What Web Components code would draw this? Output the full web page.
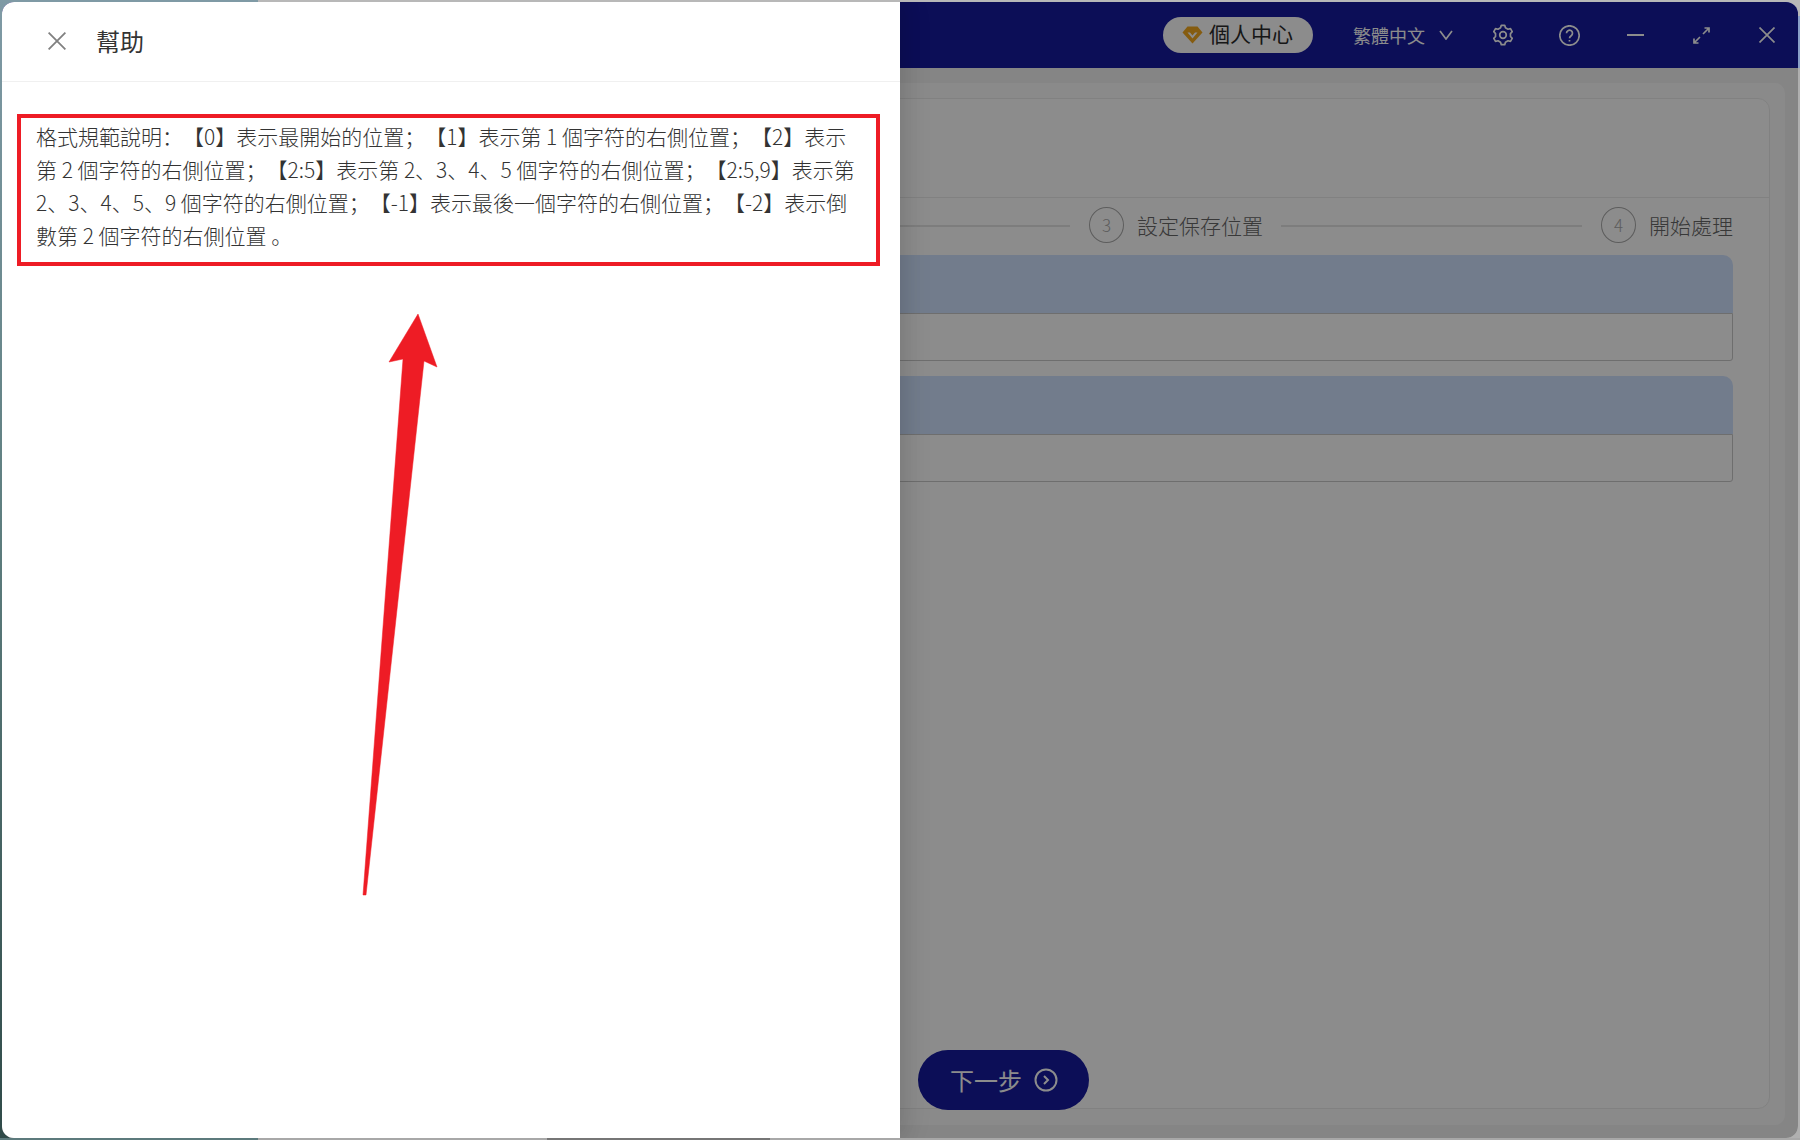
<!DOCTYPE html>
<html lang="zh-Hant">
<head>
<meta charset="utf-8">
<title>幫助</title>
<style>
    html, body {
        margin: 0;
        height: 100%;
    }
    body {
        box-sizing: border-box;
        height: 1140px;
        padding: 2px;
        font-family: "Noto Sans CJK SC", "Liberation Sans", sans-serif;
        text-spacing-trim: space-all;
        background:
            linear-gradient(90deg, #7f9aa5 0, #7f9aa5 258px, #b8b8b8 258px, #b8b8b8 100%) top / 100% 2px no-repeat,
            linear-gradient(90deg, #5c7a7c 0, #5c7a7c 258px, #a8a8a8 258px, #a8a8a8 547px, #767676 547px, #767676 770px, #a8a8a8 770px) bottom / 100% 2px no-repeat,
            linear-gradient(180deg, #7f9aa5 0, #5f7f80 45%, #2f4a48 100%) left / 14px 100% no-repeat,
            linear-gradient(180deg, #b8b8b8 0, #b8b8b8 16px, #8aa0c8 16px, #8aa0c8 68px, #b0b0b0 68px) right / 14px 100% no-repeat,
            #b0b0b0;
    }
</style>
</head>
<body>
<help-window>
    <app-header slot="header"></app-header>
    <app-step-bar></app-step-bar>
    <app-block></app-block>
    <app-block></app-block>
    <help-drawer slot="drawer" lang="zh-Hans" heading="幫助">
        格式規範說明：【0】表示最開始的位置；【1】表示第 1 個字符的右側位置；【2】表示第 2 個字符的右側位置；【2:5】表示第 2、3、4、5 個字符的右側位置；【2:5,9】表示第 2、3、4、5、9 個字符的右側位置；【-1】表示最後一個字符的右側位置；【-2】表示倒數第 2 個字符的右側位置 。
    </help-drawer>
</help-window>

<script>
    // small helper, every element below is just a template + open shadow root
    function makeShadow(el, html) {
        const root = el.attachShadow({ mode: 'open' });
        const t = document.createElement('template');
        t.innerHTML = html;
        root.appendChild(t.content.cloneNode(true));
        return root;
    }

    // outline of a six lobed cog around the point (cx, cy)
    function gearPath(cx, cy, outer, inner) {
        let d = '';
        for (let i = 0; i < 6; i++) {
            const a = -90 + i * 60;
            [[-19, inner], [-10, outer], [10, outer], [19, inner]].forEach(function (p, n) {
                const r = (a + p[0]) * Math.PI / 180;
                const x = (cx + Math.cos(r) * p[1]).toFixed(2);
                const y = (cy + Math.sin(r) * p[1]).toFixed(2);
                d += ((i === 0 && n === 0) ? 'M' : 'L') + x + ' ' + y;
            });
        }
        return d + 'z';
    }

    class HelpWindow extends HTMLElement {
        constructor() {
            super();
            makeShadow(this, `
            <style>
                :host {
                    display: flex;
                    flex-direction: column;
                    position: relative;
                    height: 1136px;
                    border-radius: 12px;
                    overflow: hidden;
                    background: #f2f2f2;
                }
                .main {
                    flex: 1;
                    display: flex;
                    flex-direction: column;
                    min-height: 0;
                    padding: 15px 13px 13px 15px;
                }
                .panel {
                    flex: 1;
                    display: flex;
                    flex-direction: column;
                    min-height: 0;
                    padding: 15px 15px 16px 15px;
                    background: #fbfbfb;
                    border-radius: 10px;
                }
                .card {
                    flex: 1;
                    display: flex;
                    flex-direction: column;
                    border: 1px solid #ececec;
                    border-radius: 12px;
                    background: #fff;
                }
                .top {
                    height: 98px;
                    border-bottom: 1px solid #ececec;
                    flex: none;
                }
                .body {
                    flex: 1;
                    display: flex;
                    flex-direction: column;
                    padding: 9px 36px 0;
                }
                .foot {
                    display: grid;
                    grid-template-columns: 1fr 1fr;
                    align-items: end;
                }
                .next {
                    grid-column: 2;
                    justify-self: start;
                    margin-left: 17px;
                    margin-bottom: -2px;
                    display: flex;
                    align-items: center;
                    gap: 12px;
                    box-sizing: border-box;
                    width: 171px;
                    height: 60px;
                    padding-left: 32px;
                    border-radius: 30px;
                    background: #161a9e;
                    color: #fff;
                    font-size: 24px;
                }
                .next span { margin-top: -2px; }
                .next svg { display: block; }
                .mask {
                    position: absolute;
                    inset: 0;
                    background: rgba(0, 0, 0, .45);
                }
                ::slotted(help-drawer) {
                    position: absolute;
                    left: 0;
                    top: 0;
                    bottom: 0;
                }
            </style>
            <slot name="header"></slot>
            <div class="main">
                <div class="panel">
                    <div class="card">
                        <div class="top"></div>
                        <div class="body"><slot></slot></div>
                        <div class="foot">
                            <div class="next"><span>下一步</span>
                                <svg width="24" height="24" viewBox="0 0 24 24" fill="none" stroke="#fff" stroke-width="2">
                                    <circle cx="12" cy="12" r="10.5"/>
                                    <path d="M10 8l4 4-4 4"/>
                                </svg>
                            </div>
                        </div>
                    </div>
                </div>
            </div>
            <div class="mask"></div>
            <slot name="drawer"></slot>`);
        }
    }

    class AppHeader extends HTMLElement {
        constructor() {
            super();
            makeShadow(this, `
            <style>
                :host {
                    display: flex;
                    align-items: center;
                    justify-content: flex-end;
                    flex: none;
                    height: 66px;
                    padding-right: 23px;
                    background: #161a9e;
                    color: #fff;
                }
                .vip {
                    display: flex;
                    align-items: center;
                    gap: 6px;
                    box-sizing: border-box;
                    width: 150px;
                    height: 36px;
                    margin-right: 40px;
                    padding-left: 19px;
                    border-radius: 18px;
                    background: #fff;
                    color: #2a2a2a;
                    font-size: 21px;
                    line-height: 33px;
                }
                .vip span { display: block; height: 36px; }
                .lang {
                    font-size: 18px;
                    margin-right: 14px;
                }
                svg { display: block; flex: none; fill: none; stroke: #fff; stroke-width: 1.7; }
                .chev { margin-right: 40px; }
                .gear { margin-right: 46px; }
                .help { margin-right: 47px; }
                .min { margin-right: 49px; }
                .max { margin-right: 49px; }
            </style>
            <div class="vip">
                <svg width="21" height="18" viewBox="0 0 21 18" style="stroke:none">
                    <path fill="#f2a81e" d="M5.500.5h10l5 6L10.500 17.500.5 6.500z"/>
                    <path fill="#fff" d="M5.500 6.500h2.500l2.500 3 2.500-3h2.500l-5 6z"/>
                </svg>
                <span>個人中心</span>
            </div>
            <span class="lang">繁體中文</span>
            <svg class="chev" width="14" height="10" viewBox="0 0 14 10"><path d="M1 1l6 8 6-8"/></svg>
            <svg class="gear" width="20" height="22" viewBox="0 0 20 22">
                <path id="cog" stroke-linejoin="round"/>
                <circle cx="10" cy="11" r="3.300"/>
            </svg>
            <svg class="help" width="21" height="21" viewBox="0 0 21 21">
                <circle cx="10.500" cy="10.500" r="9.700"/>
                <path d="M7.500 8.200a3 3 0 1 1 4.700 2.500c-1 .7-1.700 1.200-1.700 2.600"/>
                <path d="M10.500 15v1.500"/>
            </svg>
            <svg class="min" width="17" height="2" viewBox="0 0 17 2"><path d="M0 1h17" stroke-width="2"/></svg>
            <svg class="max" width="17" height="17" viewBox="0 0 17 17">
                <path d="M10 7l6-6M11.500 1h4.500v4.500M7 10l-6 6M1 11.500v4.500h4.500"/>
            </svg>
            <svg width="16" height="16" viewBox="0 0 16 16"><path d="M.5.500l15 15M15.500.500l-15 15"/></svg>`);
            this.shadowRoot.getElementById('cog').setAttribute('d', gearPath(10, 11, 9.800, 7.600));
        }
    }

    class AppStepBar extends HTMLElement {
        constructor() {
            super();
            makeShadow(this, `
            <style>
                :host {
                    display: flex;
                    align-items: center;
                    height: 36px;
                    margin-bottom: 12px;
                    color: #666;
                    font-size: 21px;
                    font-weight: 300;
                }
                .line { height: 2px; margin-top: 1px; background: #e4e4e4; flex: 1; }
                .line.fix { flex: 0 0 301px; }
                .num {
                    flex: none;
                    box-sizing: border-box;
                    width: 35px;
                    height: 36px;
                    border: 1px solid #aaa;
                    border-radius: 50%;
                    margin-left: 19px;
                    margin-right: 13px;
                    text-align: center;
                    line-height: 34px;
                    font-size: 17px;
                    color: #aaa;
                }
                .txt { white-space: nowrap; margin-right: 18px; }
                .txt:last-child { margin-right: 0; }
            </style>
            <div class="line"></div>
            <span class="num">3</span><span class="txt">設定保存位置</span>
            <div class="line fix"></div>
            <span class="num">4</span><span class="txt">開始處理</span>`);
        }
    }

    class AppBlock extends HTMLElement {
        constructor() {
            super();
            makeShadow(this, `
            <style>
                :host { display: block; margin-bottom: 15px; }
                .head {
                    height: 58px;
                    background: #d0e2ff;
                    border-radius: 10px 10px 0 0;
                }
                .box {
                    box-sizing: border-box;
                    height: 48px;
                    border: 1px solid #c8c8c8;
                    border-radius: 0 0 3px 3px;
                }
            </style>
            <div class="head"></div>
            <div class="box"></div>`);
        }
    }

    class HelpDrawer extends HTMLElement {
        constructor() {
            super();
            const root = makeShadow(this, `
            <style>
                :host {
                    display: flex;
                    flex-direction: column;
                    width: 898px;
                    background: #fff;
                    box-shadow: 6px 0 16px rgba(0, 0, 0, .08), 9px 0 28px rgba(0, 0, 0, .05);
                }
                header {
                    display: flex;
                    align-items: center;
                    gap: 30px;
                    box-sizing: border-box;
                    height: 80px;
                    padding-left: 46px;
                    border-bottom: 1px solid #f0f0f0;
                    color: #333;
                    font-size: 24px;
                }
                #title { margin-top: -2px; }
                svg.close { display: block; margin-top: -2px; fill: none; stroke: #808080; stroke-width: 1.800; }
                .note {
                    box-sizing: border-box;
                    width: 863px;
                    margin: 32px 0 0 15px;
                    padding: 2px 10px 10px 15px;
                    border: 4px solid #ee1c25;
                    font-size: 21px;
                    font-weight: 300;
                    line-height: 33px;
                    color: #333;
                }
                svg.arrow {
                    position: absolute;
                    left: 0;
                    top: 0;
                    pointer-events: none;
                }
            </style>
            <header>
                <svg class="close" width="18" height="18" viewBox="0 0 18 18"><path d="M.6.600l16.800 16.800M17.400.600L.6 17.400"/></svg>
                <span id="title"></span>
            </header>
            <div class="note"><slot></slot></div>
            <svg class="arrow" width="898" height="1136" viewBox="2 2 898 1136">
                <path fill="#ee1c25" stroke="#ee1c25" stroke-width=".5" stroke-linejoin="round" d="M418 314L437 367 424 361 366 895 363 895 403 359 389 362z"/>
            </svg>`);
            root.getElementById('title').textContent = this.getAttribute('heading');
        }
    }

    customElements.define('help-window', HelpWindow);
    customElements.define('app-header', AppHeader);
    customElements.define('app-step-bar', AppStepBar);
    customElements.define('app-block', AppBlock);
    customElements.define('help-drawer', HelpDrawer);
</script>
</body>
</html>
